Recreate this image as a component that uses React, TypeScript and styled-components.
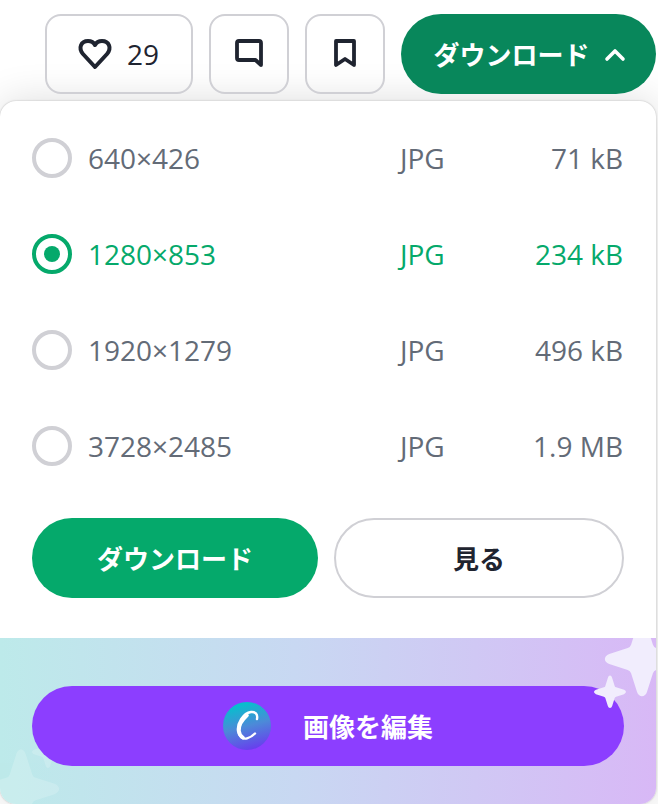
import styled, { createGlobalStyle } from "styled-components";

const sizes = [
  { id: "s", dimensions: "640×426", type: "JPG", weight: "71 kB" },
  { id: "m", dimensions: "1280×853", type: "JPG", weight: "234 kB", selected: true },
  { id: "l", dimensions: "1920×1279", type: "JPG", weight: "496 kB" },
  { id: "o", dimensions: "3728×2485", type: "JPG", weight: "1.9 MB" },
];

const STAR_PATH =
  "M50 4 C53 4 55 7 56 11 L63 33 Q64 36 67 37 L89 44 C96 47 96 53 89 56 L67 63 Q64 64 63 67 L56 89 C54 96 46 96 44 89 L37 67 Q36 64 33 63 L11 56 C4 53 4 47 11 44 L33 37 Q36 36 37 33 L44 11 C45 7 47 4 50 4 Z";

function App() {
  return (
    <>
      <GlobalStyle />
      <Page>
        <Toolbar>
          <LikeButton type="button">
            <svg width="40" height="40" viewBox="0 0 40 40" fill="none">
              <path
                d="M20 33 L8 20 C3 14 6 7 13 7 C16 7 19 9 20 11 C21 9 24 7 27 7 C34 7 37 14 32 20 Z"
                stroke="#1f2430"
                strokeWidth="4"
                strokeLinejoin="round"
              />
            </svg>
            29
          </LikeButton>
          <IconButton type="button">
            <svg width="40" height="40" viewBox="0 0 40 40" fill="none">
              <path
                d="M10 7 H30 A2 2 0 0 1 32 9 V31 L26.5 26 H10 A2 2 0 0 1 8 24 V9 A2 2 0 0 1 10 7 Z"
                stroke="#1f2430"
                strokeWidth="3.8"
                strokeLinejoin="round"
              />
            </svg>
          </IconButton>
          <IconButton type="button">
            <svg width="40" height="40" viewBox="0 0 40 40" fill="none">
              <path
                d="M11 7 H29 V31 L20 25 L11 31 Z"
                stroke="#1f2430"
                strokeWidth="3.8"
                strokeLinejoin="round"
              />
            </svg>
          </IconButton>
          <DownloadToggle type="button">
            ダウンロード
            <svg width="24" height="16" viewBox="0 0 24 16" fill="none">
              <path
                d="M4 13 L12 5 L20 13"
                stroke="#fff"
                strokeWidth="3.6"
                strokeLinecap="round"
                strokeLinejoin="round"
              />
            </svg>
          </DownloadToggle>
        </Toolbar>
        <Panel>
          <SizeList>
            {sizes.map((size) => (
              <SizeRow key={size.id} $selected={size.selected}>
                <Radio $selected={size.selected} />
                <span>{size.dimensions}</span>
                <span>{size.type}</span>
                <Weight>{size.weight}</Weight>
              </SizeRow>
            ))}
          </SizeList>
          <Actions>
            <PrimaryButton type="button">ダウンロード</PrimaryButton>
            <OutlineButton type="button">見る</OutlineButton>
          </Actions>
          <EditStrip>
            <FaintStar viewBox="0 0 100 100" $left={-22} $top={108} $size={86}>
              <path d={STAR_PATH} fill="#fff" />
            </FaintStar>
            <FaintStar viewBox="0 0 100 100" $left={30} $top={96} $size={36}>
              <path d={STAR_PATH} fill="#fff" />
            </FaintStar>
            <EditButton type="button">
              <CanvaLogo>
                <svg width="48" height="48" viewBox="0 0 48 48" fill="none">
                  <path
                    d="M34 17 C35 12 32 9.5 28 10 C20 11 14 22 15 29 C16 35 20 37.5 24 36.4 C27.5 35.4 30 33.5 32 31.5"
                    stroke="#fff"
                    strokeWidth="2.4"
                    strokeLinecap="round"
                  />
                  <path
                    d="M24 13.5 C19 18 15.5 24 16 29 C16.4 32.5 18 34.6 20 35.6"
                    stroke="#fff"
                    strokeWidth="3.6"
                    strokeLinecap="round"
                  />
                </svg>
              </CanvaLogo>
              画像を編集
            </EditButton>
            <Sparkle viewBox="0 0 100 100" $left={600} $top={-21} $size={84}>
              <path d={STAR_PATH} fill="#f1edfd" />
            </Sparkle>
            <Sparkle viewBox="0 0 100 100" $left={592} $top={36} $size={36}>
              <path d={STAR_PATH} fill="#f1edfd" />
            </Sparkle>
          </EditStrip>
        </Panel>
      </Page>
    </>
  );
}

export default App;

const GlobalStyle = createGlobalStyle`
  html, body {
    margin: 0;
    background: #fff;
  }
  * {
    box-sizing: border-box;
  }
  body {
    font-family: "Open Sans", "Noto Sans CJK JP", sans-serif;
  }
  button {
    font-family: "Open Sans", "Noto Sans CJK JP", sans-serif;
    cursor: pointer;
  }
`;

const Page = styled.div`
  width: 658px;
  height: 804px;
  overflow: hidden;
  background: #fff;
`;

const Toolbar = styled.div`
  display: flex;
  justify-content: flex-end;
  gap: 16px;
  height: 101px;
  padding: 14px 2px 0 0;
`;

const IconButton = styled.button`
  display: flex;
  align-items: center;
  justify-content: center;
  width: 80px;
  height: 80px;
  padding: 0;
  background: transparent;
  border: 2px solid #d0d0d5;
  border-radius: 16px;
`;

const LikeButton = styled(IconButton)`
  width: 148px;
  gap: 12px;
  padding: 0 4px 0 0;
  font-size: 28px;
  color: #1f2430;
`;

const DownloadToggle = styled.button`
  display: flex;
  align-items: center;
  justify-content: center;
  gap: 13px;
  width: 255px;
  height: 80px;
  padding: 0 0 0 3px;
  background: #08875b;
  border: none;
  border-radius: 40px;
  color: #fff;
  font-size: 26px;
  font-weight: 700;
`;

const Panel = styled.div`
  width: 656px;
  height: 703px;
  overflow: hidden;
  background: #fff;
  border-radius: 16px;
  box-shadow: 0 0 40px rgba(0, 0, 0, 0.14), 0 0 2px rgba(0, 0, 0, 0.25);
`;

const SizeList = styled.div`
  display: flex;
  flex-direction: column;
  padding-top: 9px;
`;

const SizeRow = styled.div<{ $selected?: boolean }>`
  display: grid;
  grid-template-columns: 40px 296px 60px 1fr;
  column-gap: 16px;
  align-items: center;
  height: 96px;
  padding: 0 33px 0 32px;
  font-size: 28px;
  color: ${(p) => (p.$selected ? "#05a96b" : "#636b77")};
`;

const Radio = styled.span<{ $selected?: boolean }>`
  display: flex;
  align-items: center;
  justify-content: center;
  width: 40px;
  height: 40px;
  border: 4px solid ${(p) => (p.$selected ? "#05a96b" : "#d0d0d5")};
  border-radius: 50%;

  &::after {
    content: "";
    display: ${(p) => (p.$selected ? "block" : "none")};
    width: 16px;
    height: 16px;
    border-radius: 50%;
    background: #05a96b;
  }
`;

const Weight = styled.span`
  text-align: right;
`;

const Actions = styled.div`
  display: flex;
  gap: 16px;
  padding: 24px 32px 40px;
`;

const PrimaryButton = styled.button`
  width: 286px;
  height: 80px;
  padding: 0;
  background: #05a96b;
  border: none;
  border-radius: 40px;
  color: #fff;
  font-size: 26px;
  font-weight: 700;
`;

const OutlineButton = styled.button`
  flex: 1;
  height: 80px;
  padding: 0;
  background: #fff;
  border: 2px solid #d0d0d5;
  border-radius: 40px;
  color: #1f2430;
  font-size: 26px;
  font-weight: 700;
`;

const EditStrip = styled.div`
  position: relative;
  height: 166px;
  overflow: hidden;
  padding: 48px 32px 0;
  background: linear-gradient(90deg, #bdeaea 0%, #c8d8f2 45%, #d8b8f6 100%);
`;

const EditButton = styled.button`
  position: relative;
  display: flex;
  align-items: center;
  justify-content: center;
  gap: 32px;
  width: 592px;
  height: 80px;
  padding: 0;
  background: #8c3eff;
  border: none;
  border-radius: 40px;
  color: #fff;
  font-size: 26px;
  font-weight: 700;
`;

const CanvaLogo = styled.span`
  display: flex;
  width: 48px;
  height: 48px;
  border-radius: 50%;
  background: linear-gradient(165deg, #00c4cc 8%, #4c8ad8 50%, #6b35f0 96%);
`;

const Sparkle = styled.svg<{ $left: number; $top: number; $size: number }>`
  position: absolute;
  left: ${(p) => p.$left}px;
  top: ${(p) => p.$top}px;
  width: ${(p) => p.$size}px;
  height: ${(p) => p.$size}px;
`;

const FaintStar = styled(Sparkle)`
  opacity: 0.18;
`;
